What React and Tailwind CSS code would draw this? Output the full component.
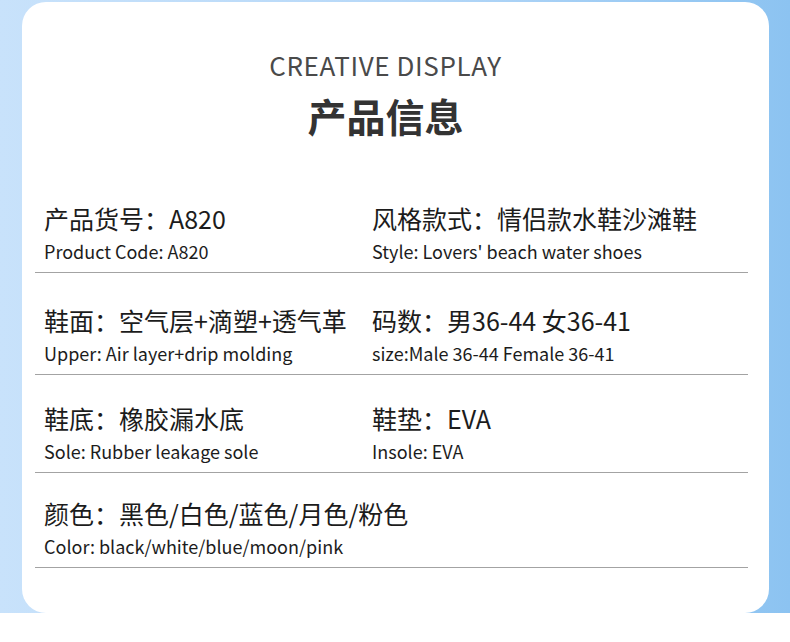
import React from "react";

const F = { fontFamily: '"Noto Sans CJK SC", "Noto Sans", sans-serif' };

const rows = [
  {
    pt: "pt-[65px]",
    items: [
      { cn: "产品货号：A820", en: "Product Code: A820" },
      { cn: "风格款式：情侣款水鞋沙滩鞋", en: "Style: Lovers' beach water shoes" },
    ],
  },
  {
    pt: "pt-[32px]",
    items: [
      { cn: "鞋面：空气层+滴塑+透气革", en: "Upper: Air layer+drip molding" },
      { cn: "码数：男36-44 女36-41", en: "size:Male 36-44 Female 36-41" },
    ],
  },
  {
    pt: "pt-[28px]",
    items: [
      { cn: "鞋底：橡胶漏水底", en: "Sole: Rubber leakage sole" },
      { cn: "鞋垫：EVA", en: "Insole: EVA" },
    ],
  },
  {
    pt: "pt-[25px]",
    items: [{ cn: "颜色：黑色/白色/蓝色/月色/粉色", en: "Color: black/white/blue/moon/pink" }],
  },
];

function Cell({ cn, en }) {
  return (
    <div className="flex flex-col">
      <div className="text-[25px] leading-[30px] text-[#1c1c1c] whitespace-nowrap">{cn}</div>
      <div className="mt-[6px] text-[18px] leading-[24px] text-[#1c1c1c] whitespace-nowrap">{en}</div>
    </div>
  );
}

export default function App() {
  return (
    <div className="w-[790px] h-[642px] bg-white overflow-hidden" style={F}>
      <div className="h-[613px] bg-gradient-to-r from-[#c8e2fb] via-[#b6d8f8] to-[#8cc3f1] pl-[22px] pr-[21px] pt-[2px]">
        <div className="h-full bg-white rounded-[24px] flex flex-col">
          <div className="pt-[48px] pr-[20px] flex flex-col items-center">
            <div className="text-[26px] leading-[30px] text-[#4a4a4a] tracking-[0.6px]">CREATIVE DISPLAY</div>
            <div className="mt-[12px] text-[39px] leading-[46px] font-bold text-[#333333]">产品信息</div>
          </div>
          <div className="ml-[13px] w-[713px]">
            {rows.map((r, i) => (
              <div key={i} className={`${r.pt} pb-[9px] border-b-[1.5px] border-[#a3a3a3]`}>
                <div className="grid grid-cols-[328px_1fr] pl-[9px]">
                  {r.items.map((it, j) => (
                    <Cell key={j} {...it} />
                  ))}
                </div>
              </div>
            ))}
          </div>
        </div>
      </div>
    </div>
  );
}
